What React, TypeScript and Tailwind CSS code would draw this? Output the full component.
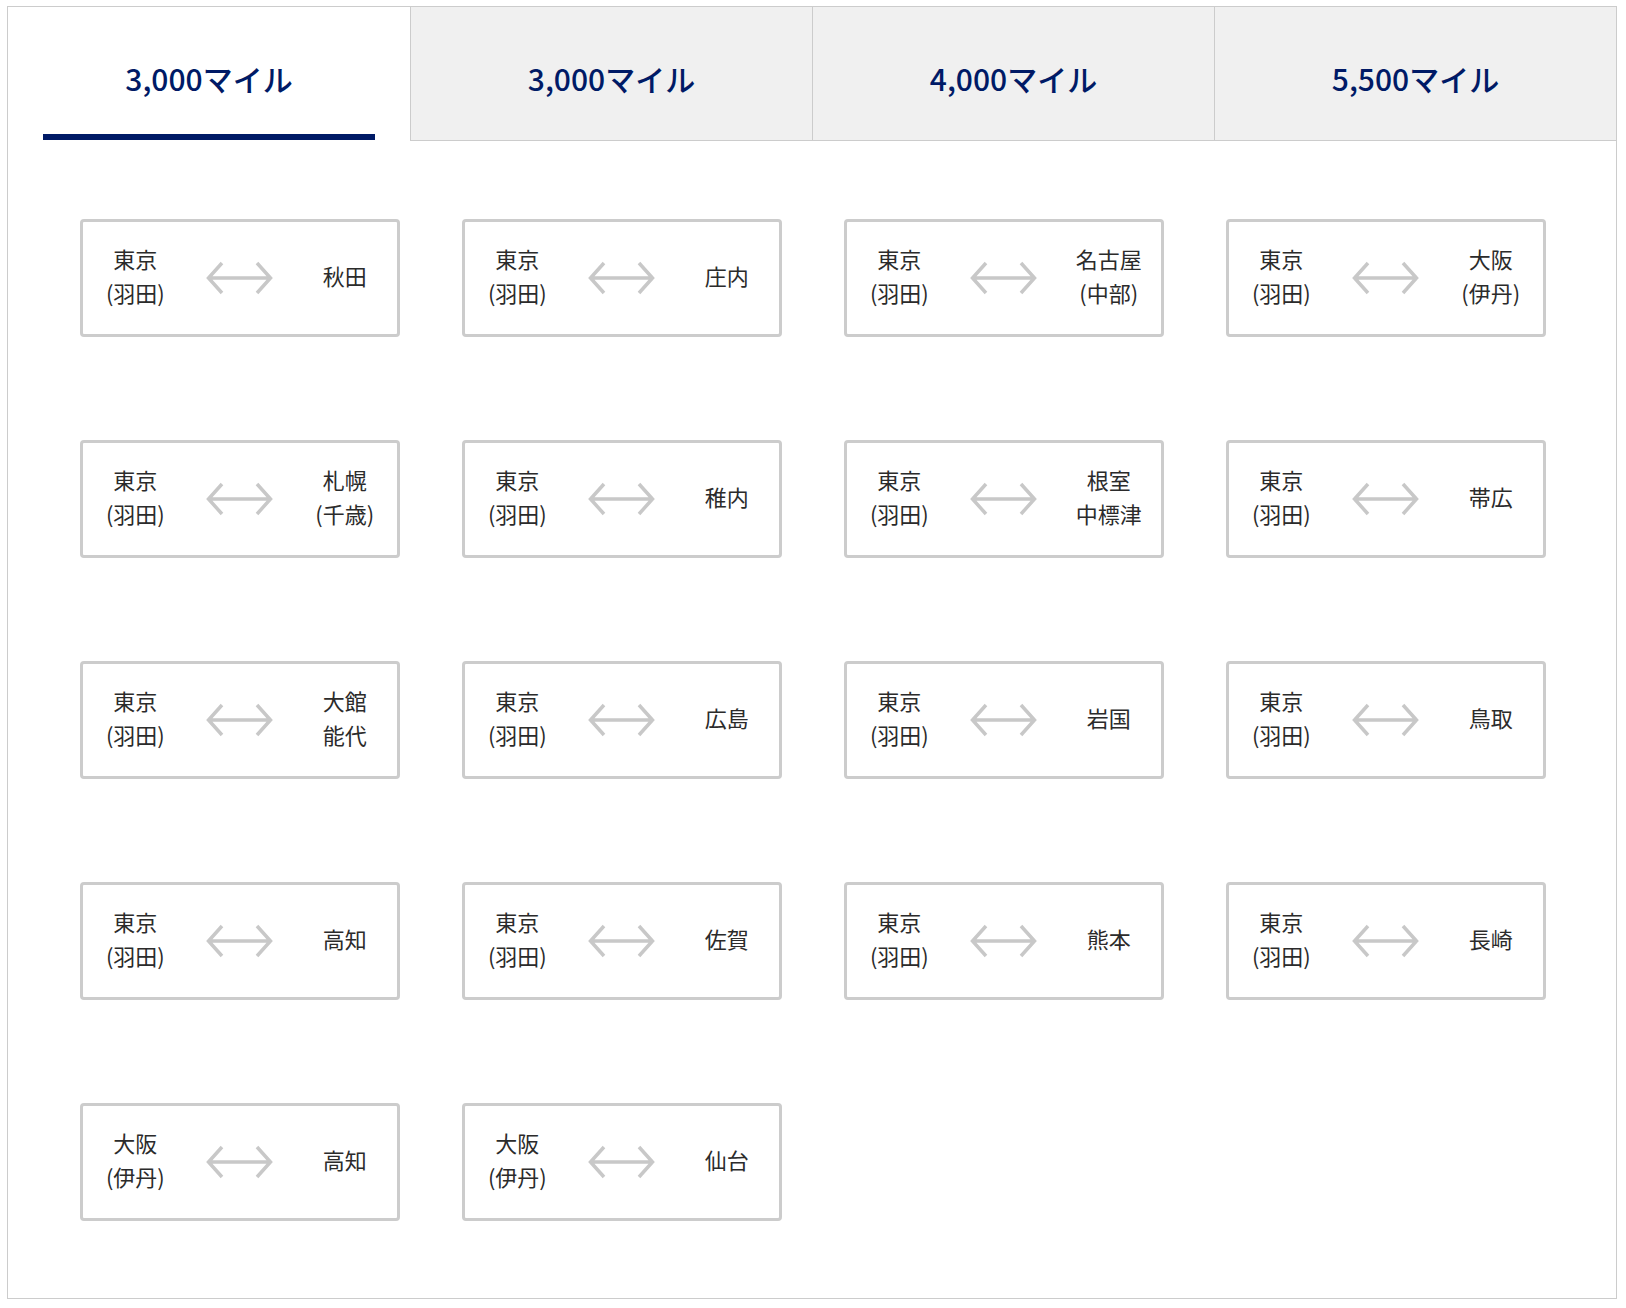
import React from "react";

type Route = { from: string[]; to: string[] };

const HANEDA = ["東京", "(羽田)"];
const ITAMI = ["大阪", "(伊丹)"];

const routes: Route[] = [
  { from: HANEDA, to: ["秋田"] },
  { from: HANEDA, to: ["庄内"] },
  { from: HANEDA, to: ["名古屋", "(中部)"] },
  { from: HANEDA, to: ["大阪", "(伊丹)"] },
  { from: HANEDA, to: ["札幌", "(千歳)"] },
  { from: HANEDA, to: ["稚内"] },
  { from: HANEDA, to: ["根室", "中標津"] },
  { from: HANEDA, to: ["帯広"] },
  { from: HANEDA, to: ["大館", "能代"] },
  { from: HANEDA, to: ["広島"] },
  { from: HANEDA, to: ["岩国"] },
  { from: HANEDA, to: ["鳥取"] },
  { from: HANEDA, to: ["高知"] },
  { from: HANEDA, to: ["佐賀"] },
  { from: HANEDA, to: ["熊本"] },
  { from: HANEDA, to: ["長崎"] },
  { from: ITAMI, to: ["高知"] },
  { from: ITAMI, to: ["仙台"] },
];

const tabs = ["3,000マイル", "3,000マイル", "4,000マイル", "5,500マイル"];

function Arrow() {
  return (
    <svg width="67" height="34" viewBox="0 0 67 34" fill="none">
      <path
        d="M16 2 L2.5 17 L16 32 M51 2 L64.5 17 L51 32 M2.5 17 H64.5"
        stroke="#c8c8c8"
        strokeWidth="3.5"
        strokeLinejoin="miter"
      />
    </svg>
  );
}

function Place({ lines }: { lines: string[] }) {
  return (
    <div className="flex flex-col items-center justify-center pb-[6px] text-[22px] leading-[34px] text-[#2b2b2b]">
      {lines.map((l, i) => (
        <span key={i}>{l}</span>
      ))}
    </div>
  );
}

function Card({ r }: { r: Route }) {
  return (
    <div className="h-[118px] w-[320px] rounded-[4px] border-[3px] border-[#cccccc] bg-white grid grid-cols-3 items-center">
      <Place lines={r.from} />
      <div className="flex items-center justify-center">
        <Arrow />
      </div>
      <Place lines={r.to} />
    </div>
  );
}

export default function App() {
  return (
    <div
      className="min-h-[1308px] w-full bg-white pt-[6px] pl-[7px]"
      style={{ fontFamily: '"Noto Sans CJK JP", "Noto Sans", sans-serif' }}
    >
      <div className="w-[1610px] h-[1293px] border border-[#cccccc] flex flex-col">
        <div className="grid grid-cols-4 h-[134px]">
          {tabs.map((t, i) =>
            i === 0 ? (
              <div key={i} className="flex flex-col bg-white">
                <div className="flex-1 flex items-center justify-center pt-[15px] text-[30px] font-medium text-[#001a66]">
                  {t}
                </div>
                <div className="mx-[35px] mb-[1px] h-[6px] bg-[#001a66]" />
              </div>
            ) : (
              <div
                key={i}
                className="flex items-center justify-center bg-[#f0f0f0] border-l border-b border-[#cccccc] pt-[9px] text-[30px] font-medium text-[#001a66]"
              >
                {t}
              </div>
            )
          )}
        </div>
        <div className="grid grid-cols-[repeat(4,320px)] gap-x-[62px] gap-y-[103px] pl-[72px] pt-[78px]">
          {routes.map((r, i) => (
            <Card key={i} r={r} />
          ))}
        </div>
      </div>
    </div>
  );
}
